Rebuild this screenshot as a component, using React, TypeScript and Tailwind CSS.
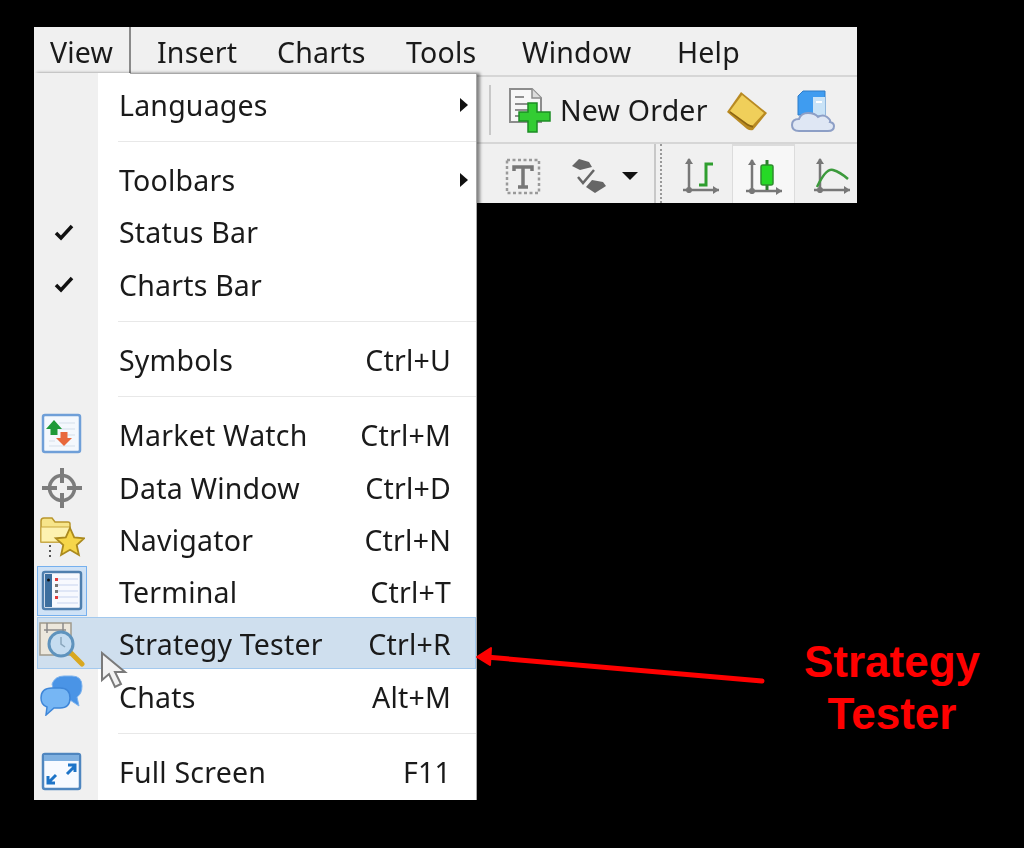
import type { ReactNode } from "react";

const FONT = "font-['Noto_Sans','Open_Sans',sans-serif]";

// ── Menu icons ──
function MarketWatchIcon() {
  return (
    <svg width="42" height="42" viewBox="0 0 42 42">
      <rect x="2" y="2" width="37" height="37" rx="2" fill="#f4f8fd" stroke="#6f9fd8" strokeWidth="2.5" />
      <path d="M18 10h16M18 16h16M22 22h12M8 28h6M8 33h26" stroke="#d5dfea" strokeWidth="1" />
      <path d="M13 7l8 9h-4.500v6h-7v-6H5z" fill="#1f9a38" />
      <path d="M23 33l-8-8h4.500v-6h7v6H31z" fill="#e8683c" />
    </svg>
  );
}

function CrosshairIcon() {
  return (
    <svg className="mt-[4px]" width="42" height="42" viewBox="0 0 42 42" fill="none" stroke="#7c7c7c">
      <circle cx="21" cy="21" r="12.500" strokeWidth="3.500" />
      <path d="M21 1v15M21 26v15M1 21h15M26 21h15" strokeWidth="4" />
    </svg>
  );
}

function NavigatorIcon() {
  return (
    <svg width="46" height="46" viewBox="0 0 46 46">
      <path d="M2 6q0-3 3-3h8l3 4h13q2 0 2 2v18H2z" fill="#f7e58a" stroke="#b9962c" strokeWidth="1.500" />
      <path d="M2 12h29v15H2z" fill="#fdf2b0" stroke="#c9a73c" strokeWidth="1" />
      <path d="M11 30v2M11 35v2M11 40v2" stroke="#555" strokeWidth="2" />
      <path d="M31 13l4.200 9.300 10 1-7.500 6.700 2.200 10-8.900-5.200-8.900 5.200 2.200-10-7.500-6.700 10-1z" fill="#f6d64a" stroke="#ab8a1e" strokeWidth="1.800" />
    </svg>
  );
}

function TerminalIcon() {
  return (
    <svg width="42" height="42" viewBox="0 0 42 42">
      <rect x="2" y="2" width="38" height="37" rx="2" fill="#f7f9fe" stroke="#4f7fae" strokeWidth="2.500" />
      <rect x="4" y="4" width="7" height="33" fill="#3d6f9f" />
      <circle cx="7.500" cy="10" r="1.500" fill="#111" />
      <path d="M16 9h21M16 15h21M16 21h21M16 27h21M16 33h21" stroke="#c7d4ee" strokeWidth="1.200" />
      <rect x="14" y="8" width="3" height="3" fill="#e23b3b" />
      <rect x="14" y="14" width="3" height="3" fill="#777" />
      <rect x="14" y="20" width="3" height="3" fill="#777" />
      <rect x="14" y="26" width="3" height="3" fill="#e23b3b" />
    </svg>
  );
}

function TesterIcon() {
  return (
    <svg className="mt-[4px]" width="46" height="46" viewBox="0 0 46 46">
      <rect x="1" y="1" width="31" height="32" fill="#ece7dc" stroke="#a09a8c" strokeWidth="1.500" />
      <path d="M8 1v10M24 1v10M5 8h22" stroke="#8a8a8a" strokeWidth="1.500" fill="none" />
      <path d="M32 31l11 11" stroke="#d9a820" strokeWidth="5" strokeLinecap="round" />
      <circle cx="22" cy="22" r="12" fill="#c5dcf0" stroke="#5f93bd" strokeWidth="3" />
      <path d="M22 15v7l4 3" stroke="#8aa6bc" strokeWidth="1.500" fill="none" />
    </svg>
  );
}

function ChatsIcon() {
  return (
    <svg width="44" height="42" viewBox="0 0 44 42">
      <path d="M12 10q3-8 12-8h8q10 0 10 10 0 8-5 11l2 9-9-6H16z" fill="#4a94e6" stroke="#7db3ee" strokeWidth="1" />
      <path d="M12 14h8q10 0 10 10t-10 10h-6l-8 7 1-8q-6-2-6-9 0-10 11-10z" fill="#76b6f4" stroke="#3e86d8" strokeWidth="1.500" />
    </svg>
  );
}

function FullScreenIcon() {
  return (
    <svg className="mt-[4px]" width="42" height="40" viewBox="0 0 42 40">
      <rect x="2" y="2" width="37" height="35" rx="2" fill="#f7faff" stroke="#4f86bf" strokeWidth="2.500" />
      <rect x="3" y="3" width="35" height="6" fill="#7fb0e0" />
      <path d="M7 31l8-8M7 24v7h7" stroke="#1d74c8" strokeWidth="3" fill="none" />
      <path d="M34 14l-8 8M27 13h7v7" stroke="#1d74c8" strokeWidth="3" fill="none" />
    </svg>
  );
}

function Check() {
  return (
    <svg className="ml-[4px] mt-[2px]" width="20" height="18" viewBox="0 0 20 18">
      <path d="M2 10l5 5L18 3" fill="none" stroke="#111" strokeWidth="3.500" />
    </svg>
  );
}

// ── Toolbar icons ──
function NewOrderIcon() {
  return (
    <svg width="44" height="48" viewBox="0 0 44 48">
      <path d="M2 3h22l9 9v24H2z" fill="#f7f7f7" stroke="#8c8c8c" strokeWidth="2" />
      <path d="M24 3v9h9" fill="#ddd" stroke="#8c8c8c" strokeWidth="1.500" />
      <path d="M7 11h9M7 18h20M7 24h20M7 30h12" stroke="#8f8f8f" strokeWidth="2" />
      <path d="M20 17h9v9h13v9H29v11h-9V35H11v-9h9z" fill="#33cc33" stroke="#1c8c24" strokeWidth="1.500" />
    </svg>
  );
}

function BookIcon() {
  return (
    <svg width="44" height="42" viewBox="0 0 44 42">
      <path d="M2 22L16 2l26 21-14 17q-3 1-6-1z" fill="#b98a22" />
      <path d="M5 21L17 5l22 18-11 12q-2 1-5-1z" fill="#f0cf5a" />
      <path d="M5 22l18 13 5 2" stroke="#8a6413" strokeWidth="1.500" fill="none" />
    </svg>
  );
}

function CloudIcon() {
  return (
    <svg width="44" height="44" viewBox="0 0 44 44">
      <path d="M7 7l5-5h22v24H7z" fill="#3f9cf0" stroke="#2f7cc8" strokeWidth="1" />
      <path d="M22 8h12v18H22z" fill="#c9e3f7" />
      <path d="M25 13h6" stroke="#fff" strokeWidth="2" />
      <path d="M8 42q-7 0-7-6t7-6q2-6 9-6t10 4q5-3 9 0t3 5q4 1 4 4 0 5-6 5z" fill="#dfe7f4" stroke="#8d9fc6" strokeWidth="2" />
    </svg>
  );
}

function TextToolIcon() {
  return (
    <svg width="36" height="38" viewBox="0 0 36 38">
      <rect x="2" y="3" width="32" height="33" fill="none" stroke="#9a9a9a" strokeWidth="2.500" strokeDasharray="3 2.500" />
      <path d="M9 14v-4h18v4M18 10v20M13 30h10" stroke="#777" strokeWidth="3.500" fill="none" />
    </svg>
  );
}

function DiamondsIcon() {
  return (
    <svg width="38" height="38" viewBox="0 0 38 38">
      <path d="M3 9l7-7 10 3 3 5-12 3z" fill="#666" />
      <path d="M17 30l6-7 11 2 3 4-11 7z" fill="#666" />
      <path d="M9 20l5 6 11-13" fill="none" stroke="#666" strokeWidth="2.500" />
    </svg>
  );
}

function Axes({ children }: { children?: ReactNode }) {
  return (
    <svg width="38" height="38" viewBox="0 0 38 38">
      <path d="M7 2v34M1 33h36" stroke="#777" strokeWidth="2.500" />
      <path d="M7 1l-4 6h8zM37 33l-6-4v8z" fill="#777" />
      <circle cx="7" cy="33" r="3" fill="#777" />
      {children}
    </svg>
  );
}

// ── Dropdown menu ──
function Row({ label, shortcut, icon, arrow, active }: {
  label: string;
  shortcut?: string;
  icon?: ReactNode;
  arrow?: boolean;
  active?: boolean;
}) {
  return (
    <div className="relative flex h-[52.300px] items-center">
      {active && (
        <div className="absolute left-[3px] right-0 top-[-2px] bottom-[2px] bg-[#cfdfee] border border-[#a3c9ee]" />
      )}
      <div className="relative flex w-[64px] shrink-0 items-center justify-center pb-[4px] pr-[9px]">{icon}</div>
      <div className="relative flex flex-1 items-center justify-between pl-[21px] pr-[25px]">
        <span>{label}</span>
        {shortcut && <span>{shortcut}</span>}
        {arrow && <span className="mr-[-17px] border-y-[7px] border-l-[8px] border-y-transparent border-l-[#111]" />}
      </div>
    </div>
  );
}

function Separator() {
  return (
    <div className="flex h-[23px] pl-[84px] pt-[10px]">
      <div className="h-px w-full bg-[#e8e8e8]" />
    </div>
  );
}

function TerminalSelected() {
  return (
    <div className="flex h-[50px] w-[50px] shrink-0 items-center justify-center border border-[#76b0ee] bg-[#cfe2f6]">
      <TerminalIcon />
    </div>
  );
}

export default function App() {
  return (
    <div className={`relative h-[848px] w-[1024px] overflow-hidden bg-black pl-[34px] pt-[27px] text-[#1a1a1a] ${FONT}`}>
      {/* ── App window ── */}
      <div className="h-[176px] w-[823px] bg-[#f0f0f0] text-[28.500px] tracking-[0.2px] blur-[0.6px]">
        <div className="flex h-[50px] items-center border-b-2 border-[#d6d6d6]">
          <div className="flex h-full w-[97px] items-center border-r-2 border-[#8a8a8a] pl-[16px] pt-[2px]">View</div>
          <div className="ml-[26px] w-[120px] pt-[2px]">Insert</div>
          <div className="w-[129px] pt-[2px]">Charts</div>
          <div className="w-[116px] pt-[2px]">Tools</div>
          <div className="w-[155px] pt-[2px]">Window</div>
          <div className="pt-[2px]">Help</div>
        </div>
        <div className="flex h-[67px] items-center border-b-2 border-[#d6d6d6] pl-[455px]">
          <div className="h-[50px] w-[2px] bg-[#c8c8c8]" />
          <div className="ml-[17px]"><NewOrderIcon /></div>
          <div className="ml-[8px] w-[147px] whitespace-nowrap pt-[2px]">New Order</div>
          <div className="ml-[18px] pt-[2px]"><BookIcon /></div>
          <div className="ml-[22px] pt-[2px]"><CloudIcon /></div>
        </div>
        <div className="flex h-[59px] items-center pl-[471px]">
          <div className="mt-[4px]"><TextToolIcon /></div>
          <div className="ml-[28px] mt-[4px]"><DiamondsIcon /></div>
          <span className="ml-[15px] mt-[4px] border-x-[8px] border-t-[8px] border-x-transparent border-t-[#111]" />
          <div className="ml-[16px] h-full w-[2px] bg-[#c8c8c8]" />
          <div className="ml-[4px] h-full w-[2px] border-l-2 border-dotted border-[#999]" />
          <div className="ml-[20px] mt-[4px]">
            <Axes><path d="M17 28h7V7h7" fill="none" stroke="#2e9e2e" strokeWidth="3" /></Axes>
          </div>
          <div className="ml-[12px] flex h-full w-[63px] items-center justify-center border-t-2 border-x border-[#dcdcdc] bg-[#f7f7f7] pt-[4px]">
            <Axes>
              <path d="M22 2v30" stroke="#2e7d2e" strokeWidth="3" />
              <rect x="16" y="7" width="12" height="20" rx="2" fill="#26d926" stroke="#2e8d2e" strokeWidth="1.500" />
            </Axes>
          </div>
          <div className="ml-[18px] mt-[4px]">
            <Axes><path d="M4 30q9-19 16-17t15 9" fill="none" stroke="#3c9a3c" strokeWidth="2.500" /></Axes>
          </div>
        </div>
      </div>

      {/* ── View menu ── */}
      <div className="absolute left-[34px] top-[73px] h-[727px] w-[443px] border-r border-[#a8a8a8] bg-[linear-gradient(90deg,#f0f0f0_64px,#fff_64px)] pt-[6px] text-[28.500px] tracking-[0.2px] shadow-[3px_0_3px_rgba(0,0,0,0.45)] blur-[0.6px]">
        <div className="absolute left-[96px] right-0 top-0 h-px bg-[#a8a8a8]" />
        <Row label="Languages" arrow />
        <Separator />
        <Row label="Toolbars" arrow />
        <Row label="Status Bar" icon={<Check />} />
        <Row label="Charts Bar" icon={<Check />} />
        <Separator />
        <Row label="Symbols" shortcut="Ctrl+U" />
        <Separator />
        <Row label="Market Watch" shortcut="Ctrl+M" icon={<MarketWatchIcon />} />
        <Row label="Data Window" shortcut="Ctrl+D" icon={<CrosshairIcon />} />
        <Row label="Navigator" shortcut="Ctrl+N" icon={<NavigatorIcon />} />
        <Row label="Terminal" shortcut="Ctrl+T" icon={<TerminalSelected />} />
        <Row label="Strategy Tester" shortcut="Ctrl+R" icon={<TesterIcon />} active />
        <Row label="Chats" shortcut="Alt+M" icon={<ChatsIcon />} />
        <Separator />
        <Row label="Full Screen" shortcut="F11" icon={<FullScreenIcon />} />
      </div>

      {/* ── Mouse cursor ── */}
      <svg className="absolute left-[100px] top-[651px]" width="30" height="38" viewBox="0 0 30 38">
        <path d="M2 2v27l7-6 6 13 6-3-6-12h10z" fill="#f2f2f2" stroke="#7a7a7a" strokeWidth="2" />
      </svg>

      {/* ── Annotation ── */}
      <svg className="absolute left-[470px] top-[640px]" width="300" height="50" viewBox="0 0 300 50">
        <path d="M292 41L16 17" stroke="#f00" strokeWidth="5" strokeLinecap="round" />
        <path d="M7 17l14-9-1 17z" fill="#f00" stroke="#f00" strokeWidth="2" strokeLinejoin="round" />
      </svg>
      <div className="absolute left-[782px] top-[636px] w-[220px] text-center font-['Liberation_Sans',sans-serif] text-[44px] font-bold leading-[52px] text-[#f00]">
        Strategy<br />Tester
      </div>
    </div>
  );
}
